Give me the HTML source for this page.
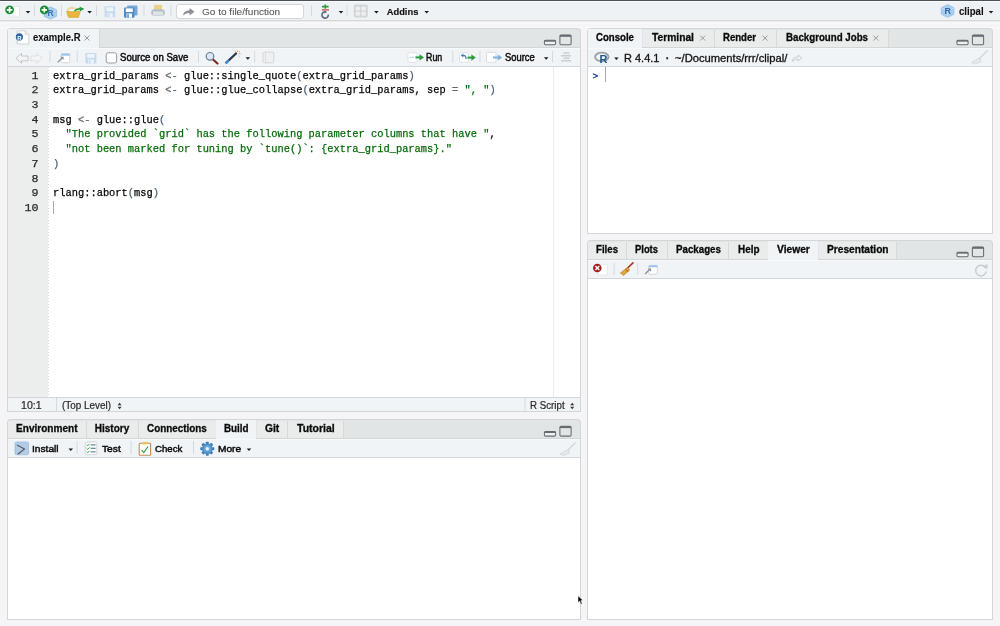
<!DOCTYPE html>
<html><head><meta charset="utf-8"><style>
*{box-sizing:border-box;margin:0;padding:0}
html,body{width:1000px;height:626px;overflow:hidden}
body{background:#f5f4f7;font-family:"Liberation Sans",sans-serif;font-size:10px;color:#222;position:relative}
.a{position:absolute}
.t{position:absolute;white-space:nowrap;line-height:1}
.b{font-weight:bold}
.code{font-family:"Liberation Mono",monospace;font-size:11.7px;line-height:14.67px;white-space:pre;-webkit-text-stroke:0.25px currentColor}
.cs{transform:scaleX(0.8889);transform-origin:0 0}
.op{color:#5c6670}
.pr{color:#4e5d72}
.str{color:#036a07}
svg{position:absolute;overflow:visible}
</style></head><body>
<div id="wrap" style="position:absolute;left:0;top:0;width:1000px;height:626px;filter:blur(0.3px)">
<div class="a" style="left:0px;top:0px;width:1000px;height:1px;background:#4a5157;"></div>
<div class="a" style="left:0px;top:1px;width:1000px;height:1px;background:#fbfbfc;"></div>
<div class="a" style="left:0px;top:2px;width:1000px;height:18px;background:#eff2f5;"></div>
<div class="a" style="left:0px;top:20px;width:1000px;height:1px;background:#d6d8da;"></div>
<div class="a" style="left:0px;top:21px;width:1000px;height:1px;background:#e9e9eb;"></div>
<div class="a" style="left:0px;top:22px;width:1000px;height:1px;background:#faf9fb;"></div>
<div class="a" style="left:0px;top:27px;width:1000px;height:1px;background:#faf9fb;"></div>
<div class="a" style="left:7px;top:28px;width:574px;height:384px;background:#d2d6d8;border-radius:4px 4px 0 0"></div>
<div class="a" style="left:8px;top:29px;width:572px;height:18px;background:#e2e5e6;border-radius:3px 3px 0 0"></div>
<div class="a" style="left:8px;top:47px;width:572px;height:1px;background:#d2d6d8;"></div>
<div class="a" style="left:8px;top:48px;width:572px;height:18px;background:#f1f4f7;"></div>
<div class="a" style="left:8px;top:48px;width:572px;height:1px;background:#f7f9fb;"></div>
<div class="a" style="left:8px;top:66px;width:572px;height:1px;background:#d2d6d8;"></div>
<div class="a" style="left:8px;top:67px;width:572px;height:344px;background:#fff;"></div>
<div class="a" style="left:7px;top:419px;width:574px;height:201px;background:#d2d6d8;border-radius:4px 4px 0 0"></div>
<div class="a" style="left:8px;top:420px;width:572px;height:18px;background:#e2e5e6;border-radius:3px 3px 0 0"></div>
<div class="a" style="left:8px;top:438px;width:572px;height:1px;background:#d2d6d8;"></div>
<div class="a" style="left:8px;top:439px;width:572px;height:18px;background:#f1f4f7;"></div>
<div class="a" style="left:8px;top:439px;width:572px;height:1px;background:#f7f9fb;"></div>
<div class="a" style="left:8px;top:457px;width:572px;height:1px;background:#d2d6d8;"></div>
<div class="a" style="left:8px;top:458px;width:572px;height:161px;background:#fff;"></div>
<div class="a" style="left:587px;top:28px;width:406px;height:206px;background:#d2d6d8;border-radius:4px 4px 0 0"></div>
<div class="a" style="left:588px;top:29px;width:404px;height:18px;background:#e2e5e6;border-radius:3px 3px 0 0"></div>
<div class="a" style="left:588px;top:47px;width:404px;height:1px;background:#d2d6d8;"></div>
<div class="a" style="left:588px;top:48px;width:404px;height:18px;background:#f1f4f7;"></div>
<div class="a" style="left:588px;top:48px;width:404px;height:1px;background:#f7f9fb;"></div>
<div class="a" style="left:588px;top:66px;width:404px;height:1px;background:#d2d6d8;"></div>
<div class="a" style="left:588px;top:67px;width:404px;height:166px;background:#fff;"></div>
<div class="a" style="left:587px;top:240px;width:406px;height:380px;background:#d2d6d8;border-radius:4px 4px 0 0"></div>
<div class="a" style="left:588px;top:241px;width:404px;height:18px;background:#e2e5e6;border-radius:3px 3px 0 0"></div>
<div class="a" style="left:588px;top:259px;width:404px;height:1px;background:#d2d6d8;"></div>
<div class="a" style="left:588px;top:260px;width:404px;height:18px;background:#f1f4f7;"></div>
<div class="a" style="left:588px;top:260px;width:404px;height:1px;background:#f7f9fb;"></div>
<div class="a" style="left:588px;top:278px;width:404px;height:1px;background:#d2d6d8;"></div>
<div class="a" style="left:588px;top:279px;width:404px;height:340px;background:#fff;"></div>
<div class="a" style="left:8px;top:29px;width:91px;height:19px;background:#f1f4f7;"></div>
<div class="a" style="left:99px;top:29px;width:1px;height:18px;background:#d6d9da;"></div>
<div class="a" style="left:8px;top:67px;width:40px;height:330px;background:#eceeee;"></div>
<div class="a" style="left:48px;top:67px;width:1px;height:330px;background:repeating-linear-gradient(#d8dada 0 1px,transparent 1px 3px);"></div>
<div class="a" style="left:553px;top:67px;width:1px;height:330px;background:#ececec;"></div>
<div class="a" style="left:8px;top:397px;width:572px;height:1px;background:#d2d6d8;"></div>
<div class="a" style="left:8px;top:398px;width:572px;height:13px;background:#f1f4f7;"></div>
<div class="a" style="left:588px;top:29px;width:54px;height:19px;background:#f1f4f7;"></div>
<div class="a" style="left:643px;top:30px;width:71px;height:17px;background:#eaecec;"></div>
<div class="a" style="left:714px;top:30px;width:1px;height:17px;background:#d6d9da;"></div>
<div class="a" style="left:715px;top:30px;width:61px;height:17px;background:#eaecec;"></div>
<div class="a" style="left:776px;top:30px;width:1px;height:17px;background:#d6d9da;"></div>
<div class="a" style="left:777px;top:30px;width:111px;height:17px;background:#eaecec;"></div>
<div class="a" style="left:888px;top:30px;width:1px;height:17px;background:#d6d9da;"></div>
<div class="a" style="left:588px;top:242px;width:38px;height:17px;background:#eaecec;"></div>
<div class="a" style="left:626px;top:242px;width:1px;height:17px;background:#d6d9da;"></div>
<div class="a" style="left:627px;top:242px;width:40px;height:17px;background:#eaecec;"></div>
<div class="a" style="left:667px;top:242px;width:1px;height:17px;background:#d6d9da;"></div>
<div class="a" style="left:668px;top:242px;width:60px;height:17px;background:#eaecec;"></div>
<div class="a" style="left:728px;top:242px;width:1px;height:17px;background:#d6d9da;"></div>
<div class="a" style="left:729px;top:242px;width:39px;height:17px;background:#eaecec;"></div>
<div class="a" style="left:768px;top:242px;width:1px;height:17px;background:#d6d9da;"></div>
<div class="a" style="left:768px;top:241px;width:50px;height:19px;background:#f1f4f7;"></div>
<div class="a" style="left:819px;top:242px;width:77px;height:17px;background:#eaecec;"></div>
<div class="a" style="left:896px;top:242px;width:1px;height:17px;background:#d6d9da;"></div>
<div class="a" style="left:8px;top:421px;width:78px;height:17px;background:#eaecec;"></div>
<div class="a" style="left:86px;top:421px;width:1px;height:17px;background:#d6d9da;"></div>
<div class="a" style="left:87px;top:421px;width:51px;height:17px;background:#eaecec;"></div>
<div class="a" style="left:138px;top:421px;width:1px;height:17px;background:#d6d9da;"></div>
<div class="a" style="left:139px;top:421px;width:77px;height:17px;background:#eaecec;"></div>
<div class="a" style="left:216px;top:421px;width:1px;height:17px;background:#d6d9da;"></div>
<div class="a" style="left:216px;top:420px;width:40px;height:19px;background:#f1f4f7;"></div>
<div class="a" style="left:257px;top:421px;width:30px;height:17px;background:#eaecec;"></div>
<div class="a" style="left:287px;top:421px;width:1px;height:17px;background:#d6d9da;"></div>
<div class="a" style="left:288px;top:421px;width:55px;height:17px;background:#eaecec;"></div>
<div class="a" style="left:343px;top:421px;width:1px;height:17px;background:#d6d9da;"></div>
<svg class="a" style="left:0;top:0" width="1000" height="626" viewBox="0 0 1000 626"><rect x="9.5" y="6.5" width="10" height="10.5" fill="#fff" stroke="#dcdcdc" stroke-width="0.7"/>
<circle cx="9.6" cy="9.9" r="4.9" fill="#fff"/>
<circle cx="9.6" cy="9.9" r="4.4" fill="#1a8a30"/>
<path d="M9.6 7.1V12.7M6.8 9.9H12.4" stroke="#fff" stroke-width="1.7"/>
<path d="M25.75 11 L30.25 11 L28 13.5 Z" fill="#1a1a1a"/>
<rect x="34" y="5" width="1" height="11" fill="#d6d9dc"/>
<path d="M50.3 6.8 L56.5 9.8 L56.5 16.3 L50.3 19.2 L44.1 16.3 L44.1 9.8 Z" fill="#a9cdef" stroke="#7fb0de" stroke-width="0.6"/>
<path d="M44.1 9.8 L50.3 12.8 L56.5 9.8 M50.3 12.8 V19.2" stroke="#cfe3f6" stroke-width="0.6" fill="none"/>
<text x="47.6" y="16" font-family="Liberation Sans" font-weight="bold" font-size="8.5" fill="#3a72b0">R</text>
<circle cx="44.3" cy="9.9" r="4.4" fill="#1a8a30"/>
<path d="M44.3 7.2V12.6M41.6 9.9H47" stroke="#fff" stroke-width="1.6"/>
<rect x="61" y="5" width="1" height="11" fill="#d6d9dc"/>
<path d="M67.3 9.2 L69.8 7.2 L73.5 7.2 L74.6 8.4 L78.3 8.4 L78.3 12.5 L67.3 12.5 Z" fill="#f1dc9e" stroke="#dcc27a" stroke-width="0.4"/>
<path d="M69 9.6 L76.5 8.8 L77.2 12 L69.4 12 Z" fill="#ffffff" stroke="#d8d8d8" stroke-width="0.4"/>
<path d="M66.6 11.6 L80.3 11.6 L78.6 17.4 L68.4 17.4 Z" fill="#eab63e" stroke="#d39a22" stroke-width="0.5"/>
<path d="M74.5 11 Q76.2 8.6 80.2 8.8" stroke="#2b9a3a" stroke-width="1.7" fill="none"/>
<path d="M79.6 6.4 L84.2 8.9 L79.8 11.4 Z" fill="#2b9a3a"/>
<path d="M82 8.3 L84.2 8.9 L82 9.6 Z" fill="#2a7ad0"/>
<path d="M87.35 11 L91.85 11 L89.6 13.5 Z" fill="#1a1a1a"/>
<rect x="96" y="5" width="1" height="11" fill="#d6d9dc"/>
<rect x="104.6" y="6.3" width="10.6" height="11" rx="1" fill="#c6daee"/>
<rect x="106.4" y="7.3" width="7" height="4" fill="#eef4fa"/>
<rect x="107.2" y="13.3" width="5.4" height="4" fill="#eef4fa"/><rect x="108" y="14" width="1.5" height="3.3" fill="#c6daee"/>
<rect x="127" y="5.5" width="10.5" height="10" rx="1" fill="#7aa8d6"/>
<rect x="124" y="7.5" width="10.5" height="10.2" rx="1" fill="#4f8ac8"/>
<rect x="125.8" y="8.4" width="7" height="3.6" fill="#fff"/>
<rect x="126.5" y="13.5" width="5.5" height="4.2" fill="#fff"/><rect x="127.3" y="14.2" width="1.5" height="3.5" fill="#4f8ac8"/>
<rect x="143.5" y="5" width="1" height="11" fill="#d6d9dc"/>
<rect x="154" y="4.8" width="8" height="5" fill="#ead28a"/>
<rect x="151.2" y="9.3" width="13.6" height="6.5" rx="3" fill="#b8bec4"/>
<rect x="153" y="11.5" width="10" height="3.8" fill="#dfe4e8"/>
<rect x="170.4" y="5" width="1" height="11" fill="#d6d9dc"/>
<rect x="176.5" y="4.5" width="127" height="14" rx="2.5" fill="#fff" stroke="#d4d7da" stroke-width="1"/>
<path d="M183 15.5 Q183.5 10.5 189.5 10.2 L189.5 8 L194.5 11.7 L189.5 15.4 L189.5 13 Q185.5 12.8 183 15.5 Z" fill="#8a9096"/>
<rect x="311" y="5" width="1" height="11" fill="#d6d9dc"/>
<path d="M325.3 4.6V8.8M322 6.6H328.6" stroke="#2c9a3a" stroke-width="1.6"/>
<rect x="321.8" y="9.3" width="7.2" height="1.2" fill="#d03a30"/>
<path d="M328.3 14.5 A3.2 3.2 0 1 1 325.7 11.8" stroke="#5a6a80" stroke-width="1.6" fill="none"/>
<path d="M324.3 10.6 L327.2 11.9 L324.6 13.6 Z" fill="#5a6a80"/>
<path d="M338.75 11 L343.25 11 L341 13.5 Z" fill="#1a1a1a"/>
<rect x="346.5" y="5" width="1" height="11" fill="#d6d9dc"/>
<rect x="353.8" y="4.6" width="14" height="12.9" rx="2" fill="#d3d6d8"/>
<rect x="355.6" y="6.4" width="4.6" height="4.2" rx="1.6" fill="#edeff1"/>
<rect x="361.3" y="6.4" width="4.6" height="4.2" rx="1.6" fill="#edeff1"/>
<rect x="355.6" y="11.6" width="4.6" height="4.2" rx="1.6" fill="#edeff1"/>
<rect x="361.3" y="11.6" width="4.6" height="4.2" rx="1.6" fill="#edeff1"/>
<path d="M374.15 11 L378.65 11 L376.4 13.5 Z" fill="#1a1a1a"/>
<path d="M424.45 11 L428.95 11 L426.7 13.5 Z" fill="#1a1a1a"/>
<path d="M947.6 4.5 L954 7.7 L954 14.3 L947.6 17.5 L941.2 14.3 L941.2 7.7 Z" fill="#a9cdef" stroke="#8bbce6" stroke-width="0.6"/>
<path d="M941.2 7.7 L947.6 10.8 L954 7.7 M947.6 10.8 V17.5" stroke="#d2e6f8" stroke-width="0.6" fill="none"/>
<text x="944.6" y="14.2" font-family="Liberation Sans" font-weight="bold" font-size="9" fill="#3468a0">R</text>
<path d="M988.75 11 L993.25 11 L991 13.5 Z" fill="#1a1a1a"/>
<path d="M17.2 30.8 H25.2 L28.8 34.4 V44 H17.2 Z" fill="#fff" stroke="#c8c8c8" stroke-width="0.8"/>
<path d="M25.2 30.8 V34.4 H28.8" fill="#e8e8e8" stroke="#c8c8c8" stroke-width="0.6"/>
<circle cx="19.4" cy="36.9" r="3.6" fill="#2c68a8"/>
<text x="17.3" y="39.5" font-family="Liberation Sans" font-weight="bold" font-size="6" fill="#fff">R</text>
<path d="M84.5 35.5 L89.5 40.5 M89.5 35.5 L84.5 40.5" stroke="#9a9a9a" stroke-width="1"/>
<rect x="544.4" y="40.199999999999996" width="11.2" height="4.6" rx="1.2" fill="#eef0f1" stroke="#656b70" stroke-width="1.05"/>
<rect x="544.4" y="40.199999999999996" width="11.2" height="1.5" fill="#656b70"/>
<rect x="559.9" y="34.9" width="11.2" height="9.9" rx="1.2" fill="#e3e6e7" stroke="#656b70" stroke-width="1.05"/>
<rect x="559.9" y="34.9" width="11.2" height="1.9" fill="#656b70"/>
<rect x="956.9" y="40.199999999999996" width="11.2" height="4.6" rx="1.2" fill="#eef0f1" stroke="#656b70" stroke-width="1.05"/>
<rect x="956.9" y="40.199999999999996" width="11.2" height="1.5" fill="#656b70"/>
<rect x="972.4" y="34.9" width="11.2" height="9.9" rx="1.2" fill="#e3e6e7" stroke="#656b70" stroke-width="1.05"/>
<rect x="972.4" y="34.9" width="11.2" height="1.9" fill="#656b70"/>
<rect x="956.9" y="252.20000000000002" width="11.2" height="4.6" rx="1.2" fill="#eef0f1" stroke="#656b70" stroke-width="1.05"/>
<rect x="956.9" y="252.20000000000002" width="11.2" height="1.5" fill="#656b70"/>
<rect x="972.4" y="246.9" width="11.2" height="9.9" rx="1.2" fill="#e3e6e7" stroke="#656b70" stroke-width="1.05"/>
<rect x="972.4" y="246.9" width="11.2" height="1.9" fill="#656b70"/>
<rect x="544.4" y="431.5" width="11.2" height="4.6" rx="1.2" fill="#eef0f1" stroke="#656b70" stroke-width="1.05"/>
<rect x="544.4" y="431.5" width="11.2" height="1.5" fill="#656b70"/>
<rect x="559.9" y="426.20000000000005" width="11.2" height="9.9" rx="1.2" fill="#e3e6e7" stroke="#656b70" stroke-width="1.05"/>
<rect x="559.9" y="426.20000000000005" width="11.2" height="1.9" fill="#656b70"/>
<path d="M16 58.3 L21.5 53.5 V56 H28 V60.8 H21.5 V63.2 Z" fill="#f4f5f6" stroke="#c3c7ca" stroke-width="1"/>
<path d="M42.3 58.3 L36.8 53.5 V56 H31 V60.8 H36.8 V63.2 Z" fill="#f4f5f6" stroke="#dcdfe1" stroke-width="1"/>
<rect x="49.5" y="51" width="1" height="11.5" fill="#d6d9dc"/>
<rect x="61.3" y="53.7" width="8.5" height="9" rx="1" fill="#fff" stroke="#c9ced2" stroke-width="0.8"/>
<rect x="61.3" y="53.7" width="8.5" height="2" fill="#9cc3ea"/>
<path d="M57.599999999999994 62.400000000000006 L62.3 57.7" stroke="#8a9096" stroke-width="1.3"/>
<path d="M60.3 56.800000000000004 L63.599999999999994 56.800000000000004 L63.599999999999994 60.1 Z" fill="#8a9096"/>
<rect x="76.7" y="51" width="1" height="11.5" fill="#d6d9dc"/>
<rect x="85.4" y="53" width="11" height="10.6" rx="1" fill="#c6daee"/>
<rect x="87.2" y="54" width="7.4" height="3.8" fill="#eef4fa"/>
<rect x="88" y="59.5" width="5.8" height="4.1" fill="#eef4fa"/><rect x="88.8" y="60.2" width="1.6" height="3.4" fill="#c6daee"/>
<rect x="106.2" y="52.8" width="10.4" height="10.2" rx="2" fill="#fff" stroke="#8d9194" stroke-width="0.9"/>
<rect x="198" y="51" width="1" height="11.5" fill="#d6d9dc"/>
<path d="M213 59.5 L217.5 63.5" stroke="#7a2a1e" stroke-width="2.2" stroke-linecap="round"/>
<circle cx="210" cy="56.3" r="3.8" fill="#d8e8f6" stroke="#6b7c8c" stroke-width="1.2"/>
<path d="M226.5 62.5 L236 53.5" stroke="#2b3a4e" stroke-width="2.4" stroke-linecap="round"/>
<path d="M226.3 62.7 L228.2 60.9" stroke="#3b8ad6" stroke-width="2.4" stroke-linecap="round"/>
<path d="M237.5 50.5 V52 M240.5 53.5 H239 M239.8 51 L238.8 52 M239.5 56.5 L238.6 55.6 M234.8 51 L235.7 52" stroke="#e8944a" stroke-width="0.9"/>
<path d="M245.55 57.2 L250.05 57.2 L247.8 59.7 Z" fill="#1a1a1a"/>
<rect x="254.2" y="51" width="1" height="11.5" fill="#d6d9dc"/>
<rect x="263" y="52" width="10.8" height="10.8" rx="1.5" fill="#eef0f2" stroke="#cfd3d6" stroke-width="0.9"/>
<path d="M265.5 52.5 V62.5" stroke="#d5d9dc" stroke-width="0.8"/>
<rect x="408" y="52.8" width="9" height="9.4" rx="1" fill="#fff" stroke="#d6d9dc" stroke-width="0.7"/>
<path d="M409.5 57.4 H414" stroke="#8fbbe8" stroke-width="1" stroke-dasharray="1.3 0.7"/>
<path d="M415.5 57.4 H420.5" stroke="#2a9a3a" stroke-width="2"/><path d="M419.5 54.2 L424 57.4 L419.5 60.6 Z" fill="#2a9a3a"/>
<rect x="452.3" y="51" width="1" height="11.5" fill="#d6d9dc"/>
<rect x="459.5" y="52.8" width="9" height="9.4" rx="1" fill="#fff" stroke="#d6d9dc" stroke-width="0.7"/>
<path d="M466 59 Q466.5 55 462.5 55.5" stroke="#3a7cc8" stroke-width="1.3" fill="none"/><path d="M463.2 53.6 L460.8 55.6 L463.4 57.4 Z" fill="#3a7cc8"/>
<path d="M467.5 57.6 H472.3" stroke="#2a9a3a" stroke-width="2"/><path d="M471.4 54.4 L475.8 57.6 L471.4 60.8 Z" fill="#2a9a3a"/>
<rect x="479.5" y="51" width="1" height="11.5" fill="#d6d9dc"/>
<rect x="486.5" y="52.3" width="9.5" height="10" rx="1" fill="#fff" stroke="#d0d4d7" stroke-width="0.8"/>
<path d="M493 57.5 H498.5" stroke="#7fb0de" stroke-width="2"/><path d="M497.8 54.5 L502.3 57.5 L497.8 60.5 Z" fill="#7fb0de"/>
<path d="M543.95 57.3 L548.45 57.3 L546.2 59.8 Z" fill="#1a1a1a"/>
<rect x="552" y="51" width="1" height="11.5" fill="#d6d9dc"/>
<path d="M563.5 53 H569.5 M561 55.8 H571 M563.5 58.3 H569.5 M561 60.8 H571" stroke="#c8cdd0" stroke-width="1.6"/>
<rect x="56" y="398" width="1" height="13" fill="#d6dadc"/>
<rect x="524.5" y="398" width="1" height="13" fill="#d6dadc"/>
<path d="M117.6 405.3 L119.6 402.8 L121.6 405.3 Z M117.6 406.7 L119.6 409.2 L121.6 406.7 Z" fill="#333"/>
<path d="M570.2 405.3 L572.2 402.8 L574.2 405.3 Z M570.2 406.7 L572.2 409.2 L574.2 406.7 Z" fill="#333"/>
<path d="M700.2 35.6 L705.2 40.6 M705.2 35.6 L700.2 40.6" stroke="#9a9a9a" stroke-width="1"/>
<path d="M762.5 35.6 L767.5 40.6 M767.5 35.6 L762.5 40.6" stroke="#9a9a9a" stroke-width="1"/>
<path d="M873.3 35.6 L878.3 40.6 M878.3 35.6 L873.3 40.6" stroke="#9a9a9a" stroke-width="1"/>
<ellipse cx="601.8" cy="56.9" rx="6.7" ry="4.3" fill="none" stroke="#9da1a5" stroke-width="1.9"/>
<text x="599.6" y="63.4" font-family="Liberation Sans" font-weight="bold" font-size="11" fill="#22548a">R</text>
<path d="M614.15 57.4 L618.65 57.4 L616.4 59.9 Z" fill="#1a1a1a"/>
<path d="M792 61.5 Q793 57 798 57 L798 55 L802 58 L798 61 L798 59 Q794.5 59 792 61.5 Z" fill="none" stroke="#c2c6ca" stroke-width="0.8"/>
<path d="M987.5 50.5 L979 59" stroke="#d3d6d8" stroke-width="1.5"/>
<path d="M979.5 58 L971.5 62.5 L975 64 L981 61.5 Z" fill="#e6e8ea" stroke="#d3d6d8" stroke-width="0.8"/>
<rect x="597.8" y="264.3" width="9.6" height="10.8" rx="1" fill="#fff" stroke="#dde0e2" stroke-width="0.7"/>
<circle cx="597.3" cy="268" r="4.3" fill="#a61e1e"/>
<path d="M595.3 266 L599.3 270 M599.3 266 L595.3 270" stroke="#fff" stroke-width="1.4"/>
<rect x="613.6" y="263" width="1" height="12" fill="#d6d9dc"/>
<path d="M633 262.8 L626.5 269" stroke="#a8321e" stroke-width="1.6" stroke-linecap="round"/>
<path d="M627.5 267.5 L620.3 273 L623.5 275.4 L629.8 270 Z" fill="#e0a63a" stroke="#b07a20" stroke-width="0.6"/>
<path d="M625.5 269.2 L628.2 271.8" stroke="#9a3a1e" stroke-width="0.9"/>
<rect x="637.2" y="263" width="1" height="12" fill="#d6d9dc"/>
<rect x="648.8" y="265.3" width="8.5" height="9" rx="1" fill="#fff" stroke="#c9ced2" stroke-width="0.8"/>
<rect x="648.8" y="265.3" width="8.5" height="2" fill="#9cc3ea"/>
<path d="M645.0999999999999 274.0 L649.8 269.3" stroke="#8a9096" stroke-width="1.3"/>
<path d="M647.8 268.40000000000003 L651.0999999999999 268.40000000000003 L651.0999999999999 271.7 Z" fill="#8a9096"/>
<path d="M985.5 267.8 A5.3 5.3 0 1 0 986.2 271.5" stroke="#c8ccd0" stroke-width="1.5" fill="none"/>
<path d="M983 266.5 L987.5 264 L987.3 269.2 Z" fill="#c8ccd0"/>
<rect x="15" y="442" width="13.6" height="12.8" rx="1.5" fill="#b4cbe6" stroke="#8fb0d6" stroke-width="0.6"/>
<path d="M17 445 L25 449.3 M24.5 449 L17.8 454.2" stroke="#56606c" stroke-width="1.3" fill="none"/>
<path d="M68.55 448.4 L73.05 448.4 L70.8 450.9 Z" fill="#1a1a1a"/>
<rect x="76.6" y="441" width="1" height="13" fill="#d6d9dc"/>
<rect x="85.2" y="442" width="11.6" height="12.6" rx="1.5" fill="#fff" stroke="#c8ccd0" stroke-width="0.8"/>
<path d="M86.6 444.8 L87.8 445.8 L89.6 443.8" stroke="#2a9a3a" stroke-width="0.9" fill="none"/>
<rect x="90.6" y="444.2" width="5" height="1.3" fill="#6d8aa8"/>
<path d="M86.6 448.3 L87.8 449.3 L89.6 447.3" stroke="#2a9a3a" stroke-width="0.9" fill="none"/>
<rect x="90.6" y="447.7" width="5" height="1.3" fill="#6d8aa8"/>
<path d="M86.6 451.8 L87.8 452.8 L89.6 450.8" stroke="#2a9a3a" stroke-width="0.9" fill="none"/>
<rect x="90.6" y="451.2" width="5" height="1.3" fill="#6d8aa8"/>
<rect x="130.6" y="441" width="1" height="13" fill="#d6d9dc"/>
<rect x="139.2" y="443.3" width="11.4" height="12" rx="1" fill="#fff" stroke="#c08a5a" stroke-width="1.1"/>
<rect x="142.3" y="441.9" width="5.2" height="2.6" rx="0.8" fill="#e8c460"/>
<path d="M141.6 450 L143.8 452.6 L148 446.5" stroke="#2a9a3a" stroke-width="1.1" fill="none"/>
<rect x="193" y="441" width="1" height="13" fill="#d6d9dc"/>
<rect x="205.8" y="441.7" width="3" height="3.2" rx="0.6" fill="#3f7fb8" transform="rotate(0 207.3 448.7)"/>
<rect x="205.8" y="441.7" width="3" height="3.2" rx="0.6" fill="#3f7fb8" transform="rotate(45 207.3 448.7)"/>
<rect x="205.8" y="441.7" width="3" height="3.2" rx="0.6" fill="#3f7fb8" transform="rotate(90 207.3 448.7)"/>
<rect x="205.8" y="441.7" width="3" height="3.2" rx="0.6" fill="#3f7fb8" transform="rotate(135 207.3 448.7)"/>
<rect x="205.8" y="441.7" width="3" height="3.2" rx="0.6" fill="#3f7fb8" transform="rotate(180 207.3 448.7)"/>
<rect x="205.8" y="441.7" width="3" height="3.2" rx="0.6" fill="#3f7fb8" transform="rotate(225 207.3 448.7)"/>
<rect x="205.8" y="441.7" width="3" height="3.2" rx="0.6" fill="#3f7fb8" transform="rotate(270 207.3 448.7)"/>
<rect x="205.8" y="441.7" width="3" height="3.2" rx="0.6" fill="#3f7fb8" transform="rotate(315 207.3 448.7)"/>
<circle cx="207.3" cy="448.7" r="5.2" fill="#4a8cc4"/>
<circle cx="207.3" cy="448.7" r="3.6" fill="#6aa8d8"/>
<circle cx="207.3" cy="448.7" r="1.7" fill="#eef2f5"/>
<path d="M246.75 448.4 L251.25 448.4 L249 450.9 Z" fill="#1a1a1a"/>
<path d="M575.5 442.5 L567.5 450.5" stroke="#d3d6d8" stroke-width="1.5"/>
<path d="M568 449.5 L560 454 L563.5 455.5 L569.5 453 Z" fill="#e6e8ea" stroke="#d3d6d8" stroke-width="0.8"/>
<path d="M578 595.8 L578 602.6 L579.6 601.1 L581 604.3 L582.2 603.8 L580.9 600.6 L583 600.5 Z" fill="#000" stroke="#fff" stroke-width="0.5"/></svg>
<div class="t" style="left:201.5px;top:7.0px;font-size:9.6px;color:#5a5a5a;transform:scaleX(1.0473);transform-origin:0 0;-webkit-text-stroke:0.1px #5a5a5a;">Go to file/function</div>
<div class="t" style="left:386.8px;top:7.8px;font-size:9.3px;font-weight:bold;color:#111;transform:scaleX(1.0);transform-origin:0 0;-webkit-text-stroke:0.15px #111;">Addins</div>
<div class="t" style="left:958.6px;top:6.6px;font-size:10px;font-weight:bold;color:#111;transform:scaleX(0.96);transform-origin:0 0;-webkit-text-stroke:0.1px #111;">clipal</div>
<div class="t" style="left:32.5px;top:33.3px;font-size:10px;font-weight:bold;color:#111;transform:scaleX(0.95);transform-origin:0 0;-webkit-text-stroke:0.1px #111;">example.R</div>
<div class="t" style="left:120.3px;top:53.2px;font-size:10.1px;color:#0a0a0a;transform:scaleX(0.9514);transform-origin:0 0;-webkit-text-stroke:0.45px #0a0a0a;">Source on Save</div>
<div class="t" style="left:426.3px;top:53.2px;font-size:10.2px;color:#0a0a0a;transform:scaleX(0.8684);transform-origin:0 0;-webkit-text-stroke:0.45px #0a0a0a;">Run</div>
<div class="t" style="left:504.8px;top:53.2px;font-size:10.2px;color:#0a0a0a;transform:scaleX(0.9219);transform-origin:0 0;-webkit-text-stroke:0.45px #0a0a0a;">Source</div>
<div class="t" style="left:20.97px;top:400.7px;font-size:10.3px;color:#262626;transform:scaleX(1.0263);transform-origin:0 0;-webkit-text-stroke:0.2px #262626;">10:1</div>
<div class="t" style="left:62.0px;top:400.7px;font-size:10.3px;color:#262626;transform:scaleX(0.9608);transform-origin:0 0;-webkit-text-stroke:0.2px #262626;">(Top Level)</div>
<div class="t" style="left:529.56px;top:400.7px;font-size:10.3px;color:#262626;transform:scaleX(0.9444);transform-origin:0 0;-webkit-text-stroke:0.2px #262626;">R Script</div>
<div class="t" style="left:595.5px;top:33.3px;font-size:10.0px;font-weight:bold;color:#0a0a0a;transform:scaleX(0.9625);transform-origin:0 0;-webkit-text-stroke:0.3px #0a0a0a;">Console</div>
<div class="t" style="left:652.3px;top:33.3px;font-size:10.0px;font-weight:bold;color:#0a0a0a;transform:scaleX(1.0244);transform-origin:0 0;-webkit-text-stroke:0.3px #0a0a0a;">Terminal</div>
<div class="t" style="left:723.3px;top:33.3px;font-size:10.0px;font-weight:bold;color:#0a0a0a;transform:scaleX(0.9571);transform-origin:0 0;-webkit-text-stroke:0.3px #0a0a0a;">Render</div>
<div class="t" style="left:785.8px;top:33.3px;font-size:10.0px;font-weight:bold;color:#0a0a0a;transform:scaleX(0.9706);transform-origin:0 0;-webkit-text-stroke:0.3px #0a0a0a;">Background Jobs</div>
<div class="t" style="left:623.75px;top:53.0px;font-size:10.5px;color:#111;transform:scaleX(1.0455);transform-origin:0 0;-webkit-text-stroke:0.3px #111;">R 4.4.1</div>
<div class="t" style="left:674.8px;top:53.0px;font-size:10.5px;color:#111;transform:scaleX(1.066);transform-origin:0 0;-webkit-text-stroke:0.3px #111;">~/Documents/rrr/clipal/</div>
<div class="t" style="left:596.0px;top:244.9px;font-size:10.0px;font-weight:bold;color:#0a0a0a;transform:scaleX(0.9652);transform-origin:0 0;-webkit-text-stroke:0.3px #0a0a0a;">Files</div>
<div class="t" style="left:634.8px;top:244.9px;font-size:10.0px;font-weight:bold;color:#0a0a0a;transform:scaleX(0.94);transform-origin:0 0;-webkit-text-stroke:0.3px #0a0a0a;">Plots</div>
<div class="t" style="left:675.6px;top:244.9px;font-size:10.0px;font-weight:bold;color:#0a0a0a;transform:scaleX(0.9739);transform-origin:0 0;-webkit-text-stroke:0.3px #0a0a0a;">Packages</div>
<div class="t" style="left:737.6px;top:244.9px;font-size:10.0px;font-weight:bold;color:#0a0a0a;transform:scaleX(0.9909);transform-origin:0 0;-webkit-text-stroke:0.3px #0a0a0a;">Help</div>
<div class="t" style="left:776.6px;top:244.9px;font-size:10.0px;font-weight:bold;color:#0a0a0a;transform:scaleX(1.025);transform-origin:0 0;-webkit-text-stroke:0.3px #0a0a0a;">Viewer</div>
<div class="t" style="left:826.6px;top:244.9px;font-size:10.0px;font-weight:bold;color:#0a0a0a;transform:scaleX(1.0167);transform-origin:0 0;-webkit-text-stroke:0.3px #0a0a0a;">Presentation</div>
<div class="t" style="left:16.3px;top:423.9px;font-size:10.0px;font-weight:bold;color:#0a0a0a;transform:scaleX(1.0082);transform-origin:0 0;-webkit-text-stroke:0.3px #0a0a0a;">Environment</div>
<div class="t" style="left:94.8px;top:423.9px;font-size:10.0px;font-weight:bold;color:#0a0a0a;transform:scaleX(1.0);transform-origin:0 0;-webkit-text-stroke:0.3px #0a0a0a;">History</div>
<div class="t" style="left:147.2px;top:423.9px;font-size:10.0px;font-weight:bold;color:#0a0a0a;transform:scaleX(0.9869);transform-origin:0 0;-webkit-text-stroke:0.3px #0a0a0a;">Connections</div>
<div class="t" style="left:224.2px;top:423.9px;font-size:10.0px;font-weight:bold;color:#0a0a0a;transform:scaleX(0.984);transform-origin:0 0;-webkit-text-stroke:0.3px #0a0a0a;">Build</div>
<div class="t" style="left:265.2px;top:423.9px;font-size:10.0px;font-weight:bold;color:#0a0a0a;transform:scaleX(1.0286);transform-origin:0 0;-webkit-text-stroke:0.3px #0a0a0a;">Git</div>
<div class="t" style="left:296.9px;top:423.9px;font-size:10.0px;font-weight:bold;color:#0a0a0a;transform:scaleX(1.05);transform-origin:0 0;-webkit-text-stroke:0.3px #0a0a0a;">Tutorial</div>
<div class="t" style="left:32.4px;top:443.6px;font-size:9.8px;color:#0a0a0a;transform:scaleX(1.0385);transform-origin:0 0;-webkit-text-stroke:0.45px #0a0a0a;">Install</div>
<div class="t" style="left:102.0px;top:443.6px;font-size:9.8px;color:#0a0a0a;transform:scaleX(1.0444);transform-origin:0 0;-webkit-text-stroke:0.45px #0a0a0a;">Test</div>
<div class="t" style="left:155.4px;top:443.6px;font-size:9.8px;color:#0a0a0a;transform:scaleX(0.9857);transform-origin:0 0;-webkit-text-stroke:0.45px #0a0a0a;">Check</div>
<div class="t" style="left:217.8px;top:443.6px;font-size:9.8px;color:#0a0a0a;transform:scaleX(1.0364);transform-origin:0 0;-webkit-text-stroke:0.45px #0a0a0a;">More</div>
<div class="t" style="left:665.8px;top:53.3px;font-size:10.5px;font-weight:bold;color:#222;transform:scaleX(1);transform-origin:0 0;-webkit-text-stroke:0.3px #222;">&middot;</div>
<div class="a code cs" style="left:53px;top:68.8px;color:#000">extra_grid_params <span class="op">&lt;-</span> glue::single_quote<span class="pr">(</span>extra_grid_params<span class="pr">)</span>
extra_grid_params <span class="op">&lt;-</span> glue::glue_collapse<span class="pr">(</span>extra_grid_params, sep <span class="op">=</span> <span class="str">", "</span><span class="pr">)</span>

msg <span class="op">&lt;-</span> glue::glue<span class="pr">(</span>
  <span class="str">"The provided `grid` has the following parameter columns that have "</span>,
  <span class="str">"not been marked for tuning by `tune()`: {extra_grid_params}."</span>
<span class="pr">)</span>

rlang::abort<span class="pr">(</span>msg<span class="pr">)</span></div>
<div class="a code" style="left:8px;top:68.8px;width:30.5px;text-align:right;color:#2a2a2a">1
2
3
4
5
6
7
8
9
10</div>
<div class="a" style="left:53px;top:201px;width:1px;height:13px;background:#aaa"></div>
<div class="a code" style="left:592.6px;top:69.6px;font-size:9.6px;color:#23418c;-webkit-text-stroke:0.35px #23418c">&gt;</div>
<div class="a" style="left:605px;top:67px;width:1px;height:14.5px;background:#a8a8a8"></div>
</div>
</body></html>
